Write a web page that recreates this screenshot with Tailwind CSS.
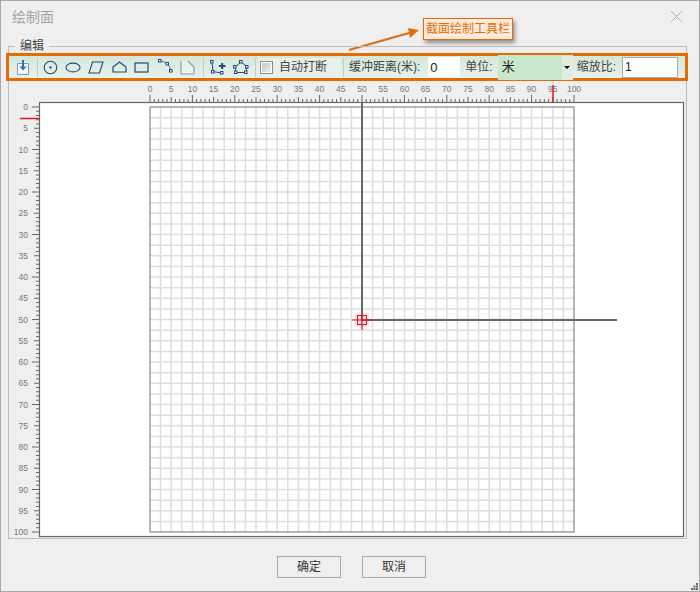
<!DOCTYPE html>
<html lang="zh-CN">
<head>
    <meta charset="UTF-8">
    <title>绘制面</title>
    <script src="https://cdn.jsdelivr.net/npm/@tailwindcss/browser@4"></script>
</head>
<body class="bg-[#efefef]">
    <div class="relative w-[700px] h-[592px] flex flex-col overflow-hidden border border-[#a8a8a8] bg-[#efefef] font-['Liberation_Sans','Noto_Sans_CJK_SC',sans-serif]">
        <!-- title bar -->
        <div class="h-[45px] shrink-0 flex items-start justify-between pl-[11px] pr-[16px] pt-[6px]">
            <span class="text-[14px] leading-[20px] text-[#a3a3a3]">绘制面</span>
            <svg class="mt-[3px]" width="13" height="13" viewBox="0 0 13 13" fill="none" stroke="#b0b0b0" stroke-width="1"><path d="M1 1L12 12M12 1L1 12"/></svg>
        </div>

        <!-- callout over the toolbar -->
        <div class="absolute left-[422px] top-[17px] w-[90px] h-[22px] flex items-center justify-center bg-[#fdeada] border border-[#e36c09] shadow-[2px_3px_4px_rgba(0,0,0,0.4)] text-[12px] text-[#e36c09] whitespace-nowrap">截面绘制工具栏</div>
        <svg class="absolute left-[340px] top-[24px]" width="84" height="32" viewBox="0 0 84 32"><path d="M8 25L68 8" stroke="#e36c09" stroke-width="2"/><path d="M67 3L78 5L69 13Z" fill="#e36c09"/></svg>

        <!-- fieldset -->
        <div class="relative ml-[7px] w-[679px] h-[493px] shrink-0 border border-[#bdbdbd]">
            <span class="absolute left-[6px] top-[-9px] px-[5px] bg-[#efefef] text-[12px] leading-[16px] text-[#444]">编辑</span>

            <!-- toolbar -->
            <div class="absolute left-[-3px] top-[6px] w-[682px] h-[28px] flex items-center border-[3px] border-[#e36c09] bg-linear-to-b from-[#d3e8d9] to-[#e9f1eb] text-[12px] text-[#444]">
                <svg class="ml-[7px]" width="14" height="17" viewBox="0 0 14 17" fill="none"><path d="M1.500 4.500H12.500V15.500H1.500Z" fill="#f4f8fc" stroke="#7f98bd"/><path d="M7 1V8" stroke="#2f6fb5" stroke-width="2"/><path d="M3.500 7.500H10.500L7 11.500Z" fill="#2f6fb5"/></svg>
                <div class="ml-[7px] w-px h-[19px] bg-[#c4cbc6]"></div>
                <svg class="ml-[5px]" width="15" height="15" viewBox="0 0 15 15" fill="none" stroke="#1f4a7c" stroke-width="1.1"><circle cx="7.5" cy="7.5" r="6.3"/><circle cx="7.5" cy="7.5" r=".6" fill="#1f4a7c"/></svg>
                <svg class="ml-[7px]" width="16" height="11" viewBox="0 0 16 11" fill="none" stroke="#1f4a7c" stroke-width="1.1"><ellipse cx="8" cy="5.5" rx="7" ry="4.4"/></svg>
                <svg class="ml-[7px]" width="16" height="13" viewBox="0 0 16 13" fill="none" stroke="#1f4a7c" stroke-width="1.1"><path d="M4.5 1H15L11.5 12H1Z"/></svg>
                <svg class="ml-[8px]" width="15" height="12" viewBox="0 0 15 12" fill="none" stroke="#1f4a7c" stroke-width="1.2"><path d="M1 6L7.5 1L14 6V11H1Z"/></svg>
                <svg class="ml-[7px]" width="15" height="11" viewBox="0 0 15 11" fill="none" stroke="#1f4a7c" stroke-width="1.2"><rect x="1" y="1" width="13" height="9"/></svg>
                <svg class="ml-[9px] mb-[2px]" width="15" height="14" viewBox="0 0 15 14" fill="none" stroke="#1f4a7c" stroke-width="1"><path d="M2 2C5 2.500 7 3 9 4.500C11 6.500 12.500 9 13 12" stroke="#5577a0"/><rect x="0.500" y="0.500" width="2.500" height="2.500" fill="#fff"/><rect x="8" y="3.500" width="2.500" height="2.500" fill="#fff"/><rect x="11.500" y="10.500" width="2.500" height="2.500" fill="#fff"/></svg>
                <svg class="ml-[7px]" width="15" height="15" viewBox="0 0 15 15" fill="#fff" fill-opacity=".3" stroke="#7f98bd" stroke-width="1.100"><path d="M1 1V14H14V7L8 1"/></svg>
                <div class="ml-[8px] w-px h-[19px] bg-[#c4cbc6]"></div>
                <svg class="ml-[6px]" width="16" height="15" viewBox="0 0 16 15" fill="none" stroke="#1f4a7c"><path d="M2 2L3 11.500L11 13"/><rect x="0.500" y="0.500" width="2.500" height="2.500" fill="#fff"/><rect x="1.500" y="10.500" width="2.500" height="2.500" fill="#fff"/><rect x="10.500" y="11.500" width="2.500" height="2.500" fill="#fff"/><path d="M9 6H15.500M12.200 3V9" stroke-width="2"/></svg>
                <svg class="ml-[7px]" width="16" height="15" viewBox="0 0 16 15" fill="none" stroke="#1f4a7c"><path d="M2 7L8 2L14 6.500L13 12.500H3Z"/><rect x="6.500" y="0.500" width="2.500" height="2.500" fill="#fff"/><rect x="0.500" y="5.500" width="2.500" height="2.500" fill="#fff"/><rect x="12.500" y="5.500" width="2.500" height="2.500" fill="#fff"/><rect x="1.500" y="11" width="2.500" height="2.500" fill="#fff"/><rect x="11.500" y="11" width="2.500" height="2.500" fill="#fff"/></svg>
                <div class="ml-[6px] w-px h-[19px] bg-[#c4cbc6]"></div>
                <div class="ml-[2px] w-[83px] h-[19px] flex items-center bg-[#e9efea]">
                    <span class="ml-[2px] w-[13px] h-[13px] border border-[#8c8c8c] bg-linear-to-br from-[#c0c0c0] to-[#f6f6f6] shadow-[inset_0_0_0_1px_#fff]"></span>
                    <span class="ml-[6px] whitespace-nowrap">自动打断</span>
                </div>
                <div class="ml-[2px] w-px h-[19px] bg-[#c4cbc6]"></div>
                <span class="ml-[5px] whitespace-nowrap">缓冲距离(米):</span>
                <input class="ml-[8px] w-[32px] h-[20px] pl-[2px] bg-white text-[13px] text-[#222] outline-none" value="0">
                <span class="ml-[5px] whitespace-nowrap">单位:</span>
                <div class="ml-[5px] w-[64px] h-[25px] flex items-center pl-[4px] bg-[#c9e7cd] text-[13px] text-[#222]">米</div>
                <div class="w-[11px] h-[25px] flex items-center justify-center bg-[#dfecdf]">
                    <span class="w-0 h-0 border-x-[3px] border-t-[3px] border-x-transparent border-t-black"></span>
                </div>
                <span class="ml-[4px] whitespace-nowrap">缩放比:</span>
                <input class="ml-[6px] w-[56px] h-[21px] pl-[2px] border border-[#aaa] bg-white text-[12px] text-[#222] outline-none" value="1">
            </div>

            <!-- ruled drawing canvas -->
            <svg id="canvas" class="absolute left-[-1px] top-[38px] block" width="679" height="453" viewBox="8 85 679 453"></svg>
        </div>

        <!-- buttons -->
        <div class="mt-[17px] ml-[276px] flex gap-[21px]">
            <button class="w-[64px] h-[22px] border border-[#a8a8a8] text-[12px] text-[#333]">确定</button>
            <button class="w-[64px] h-[22px] border border-[#a8a8a8] text-[12px] text-[#333]">取消</button>
        </div>

        <!-- resize grip -->
        <svg class="absolute right-0 bottom-0" width="8" height="8" viewBox="0 0 8 8" fill="#666"><rect x="5" y="0" width="2" height="2"/><rect x="2.500" y="2.500" width="2" height="2"/><rect x="5" y="2.500" width="2" height="2"/><rect x="0" y="5" width="2" height="2"/><rect x="2.500" y="5" width="2" height="2"/><rect x="5" y="5" width="2" height="2"/></svg>
    </div>

    <script>
        const X0 = 150, Y0 = 107, SCALE_X = 4.24, SCALE_Y = 4.25;
        let out = '<rect x="39.500" y="102.500" width="644" height="434" fill="#fff" stroke="#666" stroke-width="1.200"/>';

        // grid, one cell every 2.5 units
        for (let i = 1; i < 40; i++) {
            const x = X0 + i * 2.5 * SCALE_X, y = Y0 + i * 2.5 * SCALE_Y;
            out += `<path d="M${x} ${Y0}V${Y0 + 425}M${X0} ${y}H${X0 + 424}" stroke="#dedede" stroke-width="1.500"/>`;
        }
        out += `<rect x="${X0}" y="${Y0}" width="424" height="425" fill="none" stroke="#888" stroke-width="1.200"/>`;

        // rulers
        for (let v = 0; v <= 100; v++) {
            const x = X0 + v * SCALE_X, y = Y0 + v * SCALE_Y;
            const len = v % 10 === 0 ? 7 : v % 5 === 0 ? 5 : 3;
            out += `<path d="M${x} 102V${102 - len}M39 ${y}H${39 - len}" stroke="#666" stroke-width="1"/>`;
            if (v % 5 === 0) {
                out += `<text x="${x}" y="92" text-anchor="middle" font-size="8.500" fill="#777">${v}</text>`;
                out += `<text x="28" y="${y + 3}" text-anchor="end" font-size="8.500" fill="#777">${v}</text>`;
            }
        }

        // axes and cursor
        out += '<path d="M362 102V320H617" fill="none" stroke="#666" stroke-width="2"/>';
        out += '<path d="M20 118.500H39M553 85V102" stroke="#e8141c" stroke-width="1.500"/>';
        out += '<rect x="355" y="313" width="14" height="14" fill="#ff3040" fill-opacity=".14"/>';
        out += '<path d="M352 320H372M362 315V330" stroke="#f01020" stroke-width="1.200"/>';
        out += '<rect x="357.500" y="315.500" width="9" height="9" fill="none" stroke="#e01020"/>';

        document.getElementById('canvas').innerHTML = out;
    </script>
</body>
</html>
